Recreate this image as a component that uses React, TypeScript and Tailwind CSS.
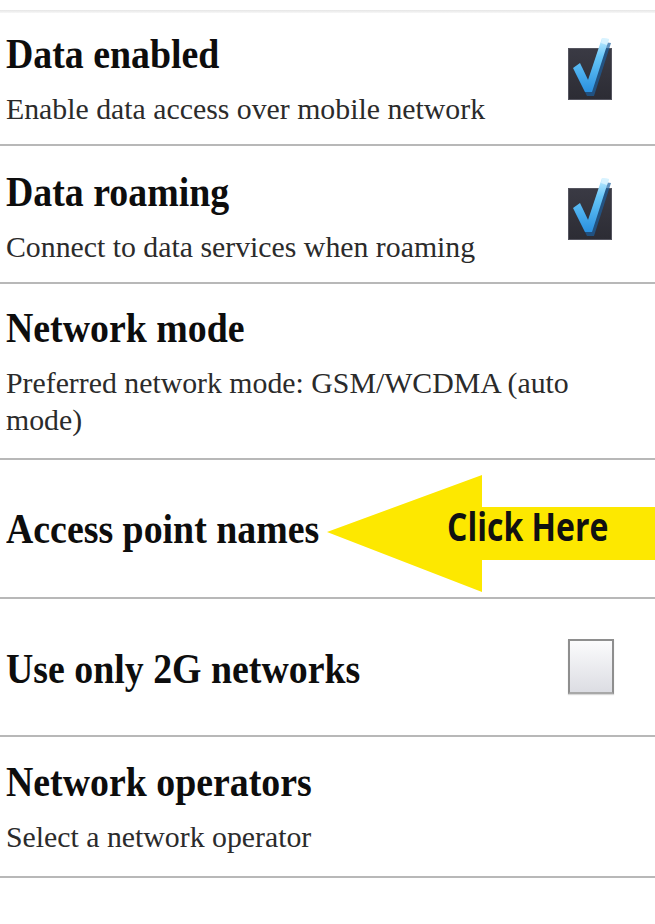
import React from "react";

const serif = { fontFamily: '"Liberation Serif", "Times New Roman", serif' };

function Title({ children }: { children: React.ReactNode }) {
  return (
    <div className="text-[43px] leading-[48px] font-bold text-[#0d0d0d] whitespace-nowrap">
      <span className="inline-block origin-left scale-x-[0.88]">{children}</span>
    </div>
  );
}

function Sub({ children }: { children: React.ReactNode }) {
  return <div className="mt-[12px] text-[29.8px] leading-[37px] text-[#2b2b2b]">{children}</div>;
}

function Checked() {
  return (
    <svg width="46" height="64" viewBox="0 0 46 64" className="block">
      <defs>
        <linearGradient id="chk" x1="0" y1="0" x2="0" y2="1">
          <stop offset="0" stopColor="#c2ebff" />
          <stop offset="0.35" stopColor="#66c6f8" />
          <stop offset="1" stopColor="#2a90e0" />
        </linearGradient>
        <linearGradient id="boxg" x1="0" y1="0" x2="0" y2="1">
          <stop offset="0" stopColor="#3a3a44" />
          <stop offset="1" stopColor="#2c2c34" />
        </linearGradient>
      </defs>
      <rect x="0.5" y="11.5" width="43" height="51" fill="url(#boxg)" stroke="#55555f" strokeWidth="1" />
      <path d="M6,33 L13,28 L21,45 L35,3 L42,4 L25,57 L18,57 Z" fill="#1c5f9e" opacity="0.7" transform="translate(1,2)" />
      <path d="M5,31 L12,26 L20,43 L34,1 L41,2 L24,55 L17,55 Z" fill="url(#chk)" />
      <path d="M34,1 L41,2 L39,8 L33,6 Z" fill="#e0f5ff" opacity="0.8" />
    </svg>
  );
}

function Unchecked() {
  return (
    <div className="w-[46px] h-[55px] border-2 border-[#8e8e8e] border-b-[#a8a8a8] bg-linear-to-b from-[#fbfbfc] to-[#dcdde3] shadow-[0_1px_1px_rgba(0,0,0,0.15)]" />
  );
}

export default function App() {
  return (
    <div className="w-[655px] h-[924px] bg-white overflow-hidden" style={serif}>
      <div className="h-[10px] bg-white" />
      <div className="h-[3px] bg-linear-to-b from-[#e6e6e6] to-[#f7f7f7]" />

      <div className="h-[133px] border-b-2 border-[#b8b8b8] flex items-center justify-between pl-[6px] pr-[41px]">
        <div>
          <Title>Data enabled</Title>
          <Sub>Enable data access over mobile network</Sub>
        </div>
        <div className="self-start mt-[24px]">
          <Checked />
        </div>
      </div>

      <div className="h-[138px] border-b-2 border-[#b8b8b8] flex items-center justify-between pl-[6px] pr-[41px]">
        <div className="mt-[4px]">
          <Title>Data roaming</Title>
          <Sub>Connect to data services when roaming</Sub>
        </div>
        <div className="self-start mt-[31px]">
          <Checked />
        </div>
      </div>

      <div className="h-[176px] border-b-2 border-[#b8b8b8] flex items-center pl-[6px] pr-[60px]">
        <div>
          <Title>Network mode</Title>
          <Sub>Preferred network mode: GSM/WCDMA (auto mode)</Sub>
        </div>
      </div>

      <div className="relative h-[139px] border-b-2 border-[#b8b8b8] flex items-center pl-[6px]">
        <Title>Access point names</Title>
        <svg className="absolute left-0 top-0 pointer-events-none" width="655" height="137" viewBox="0 0 655 137">
          <polygon points="327,72 482,15 482,47 655,47 655,100 482,100 482,132" fill="#fde800" />
        </svg>
        <span
          className="absolute left-[447px] top-[46px] text-[40px] leading-[40px] font-bold text-[#111] whitespace-nowrap inline-block origin-left scale-x-[0.8]"
          style={{ fontFamily: '"Open Sans", "Liberation Sans", sans-serif' }}
        >
          Click Here
        </span>
      </div>

      <div className="h-[138px] border-b-2 border-[#b8b8b8] flex items-center justify-between pl-[6px] pr-[41px]">
        <div className="mt-[3px]">
          <Title>Use only 2G networks</Title>
        </div>
        <div className="mb-[2px]">
          <Unchecked />
        </div>
      </div>

      <div className="h-[141px] border-b-2 border-[#b8b8b8] flex items-center pl-[6px]">
        <div>
          <Title>Network operators</Title>
          <Sub>Select a network operator</Sub>
        </div>
      </div>
    </div>
  );
}
